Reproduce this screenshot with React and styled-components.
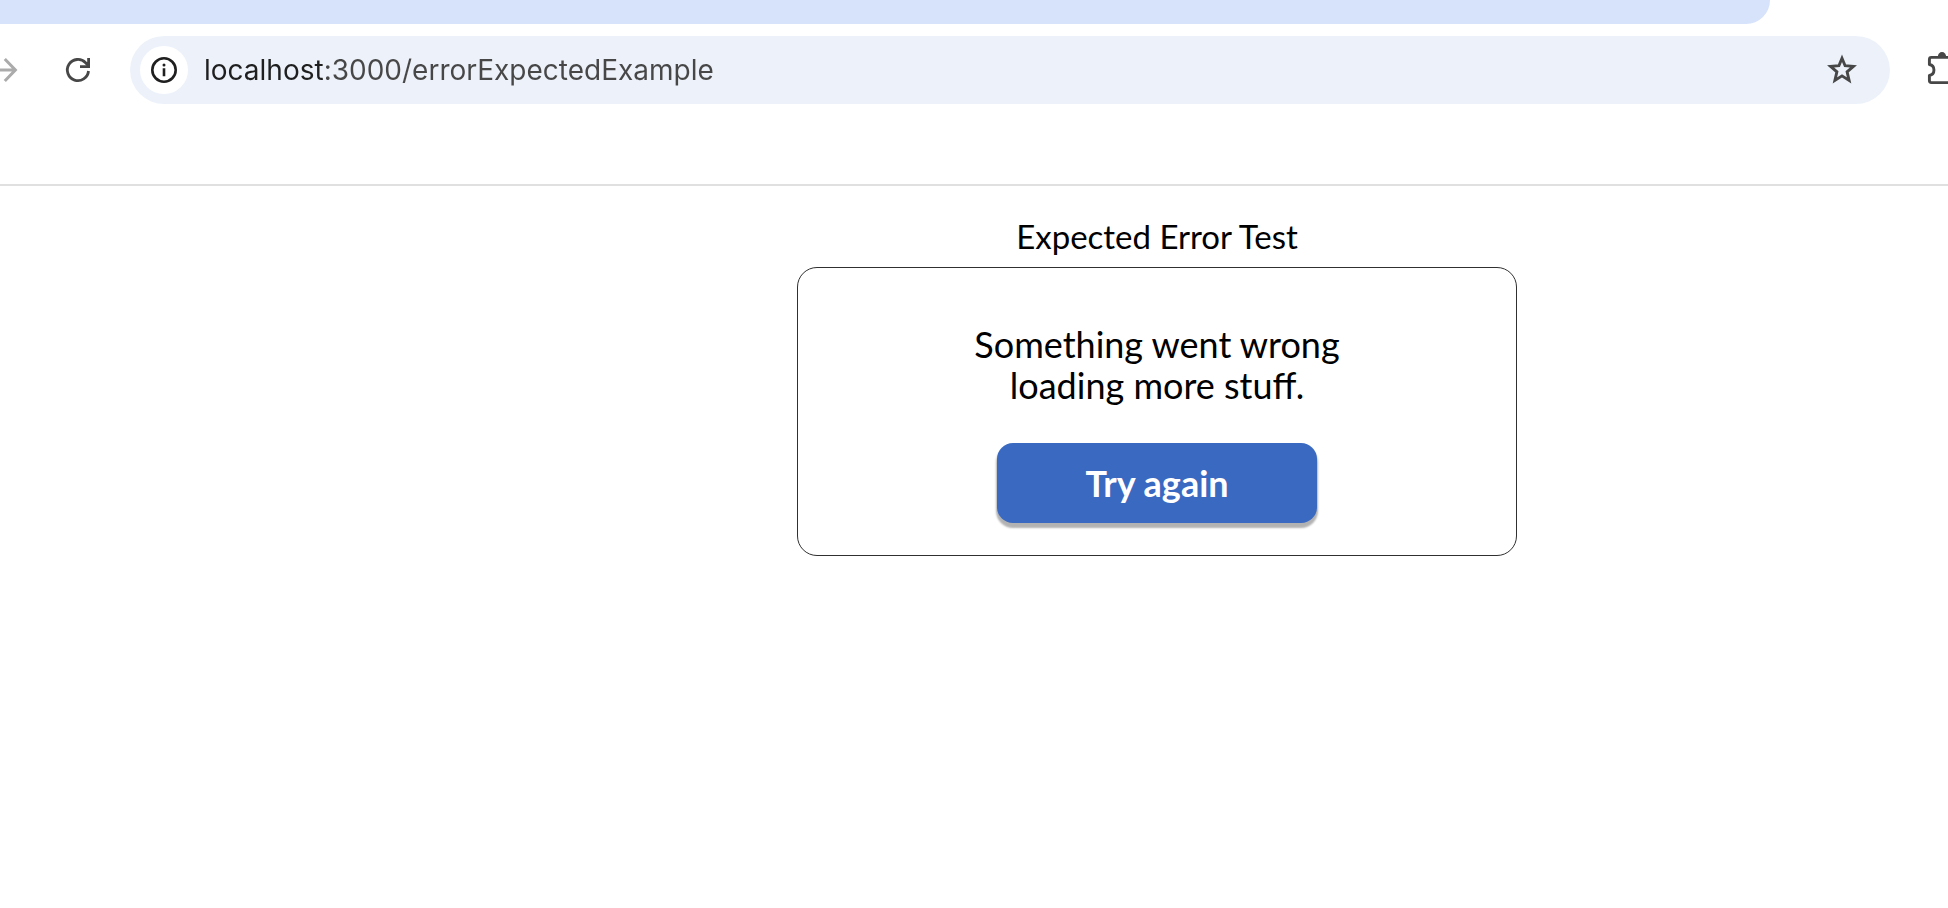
import React, { useState } from "react";
import styled, { createGlobalStyle } from "styled-components";

const GlobalStyle = createGlobalStyle`
  * {
    box-sizing: border-box;
  }
  body {
    margin: 0;
    background: #fff;
    color: #000;
    font-family: Lato, "Liberation Sans", sans-serif;
    overflow-x: hidden;
  }
`;

const Chrome = styled.header`
  border-bottom: 2px solid #e0e0e0;
`;

const TabStrip = styled.div`
  height: 24px;
  margin-right: 178px;
  background: #d7e2fb;
  border-bottom-right-radius: 24px;
`;

const Toolbar = styled.nav`
  display: flex;
  align-items: center;
  gap: 30px;
  padding: 12px 0 80px;
`;

const IconButton = styled.button`
  flex: none;
  display: flex;
  align-items: center;
  justify-content: ${(p) => p.$align || "center"};
  width: ${(p) => p.$width || 44}px;
  height: 48px;
  padding: 0;
  border: 0;
  border-radius: ${(p) => (p.$round ? "50%" : "0")};
  background: ${(p) => (p.$round ? "#fff" : "transparent")};
  color: ${(p) => p.$color || "#474747"};
  overflow: hidden;
  cursor: pointer;

  svg {
    flex: none;
    display: block;
  }
`;

const AddressBar = styled.form`
  flex: 1;
  min-width: 0;
  display: flex;
  align-items: center;
  height: 68px;
  padding: 0 24px 0 10px;
  border-radius: 34px;
  background: #edf2fa;
`;

const AddressInput = styled.input`
  flex: 1;
  min-width: 0;
  height: 48px;
  margin: 0 16px;
  padding: 0;
  border: 0;
  outline: 0;
  font: 400 28px/48px Inter, "Liberation Sans", sans-serif;
  background: linear-gradient(to right, #1f1f1f 119px, #474747 119px);
  background-clip: text;
  -webkit-background-clip: text;
  color: transparent;
  caret-color: #1f1f1f;
`;

const Main = styled.main`
  display: flex;
  flex-direction: column;
  align-items: center;
  padding: 32px 0 32px 366px;
`;

const Title = styled.h1`
  margin: 0 0 13px;
  font-size: 33px;
  line-height: 36px;
  font-weight: 400;
`;

const Card = styled.section`
  display: flex;
  flex-direction: column;
  align-items: center;
  width: 100%;
  max-width: 720px;
  padding: 56px 32px 32px;
  border: 1px solid #303030;
  border-radius: 20px;
`;

const Message = styled.p`
  max-width: 400px;
  margin: 0 0 37px;
  font-size: 36px;
  line-height: 41px;
  font-weight: 400;
  text-align: center;
`;

const RetryButton = styled.button`
  width: 320px;
  height: 80px;
  padding: 0;
  border: 0;
  border-radius: 16px;
  background: #3a69c1;
  box-shadow: 0 4px 2px 1px rgba(0, 0, 0, 0.3);
  color: #fff;
  font: 700 36px/40px Lato, "Liberation Sans", sans-serif;
  cursor: pointer;
`;

const ForwardIcon = () => (
  <svg width="26" height="32" viewBox="0 0 26 32" fill="none" stroke="currentColor" strokeWidth="3">
    <path d="M0 16H15.5M4.8 5L15.4 16L4.8 27" />
  </svg>
);

const ReloadIcon = () => (
  <svg width="32" height="32" viewBox="0 0 32 32" fill="none" stroke="currentColor" strokeWidth="2.8">
    <path d="M26.5 17A10.6 10.6 0 1 1 23.6 8.7L26 11.4" />
    <path d="M26.6 4V12.6H18" />
    <path d="M22 8L27 12.5V8Z" fill="currentColor" stroke="none" />
  </svg>
);

const InfoIcon = () => (
  <svg width="32" height="32" viewBox="0 0 32 32" fill="none" stroke="currentColor" strokeWidth="2.6">
    <circle cx="16" cy="16" r="11.7" />
    <path d="M16 14.3V22.3" />
    <circle cx="16" cy="11" r="1.5" fill="currentColor" stroke="none" />
  </svg>
);

const StarIcon = () => (
  <svg width="32" height="32" viewBox="0 0 32 32" fill="none" stroke="currentColor" strokeWidth="2.9">
    <path d="M16 4.2L19.1 11.7L27.4 12.4L21.1 17.8L23.1 26.4L16 21.9L8.9 26.4L10.9 17.8L4.6 12.4L12.9 11.7Z" />
  </svg>
);

const ExtensionsIcon = () => (
  <svg width="44" height="40" viewBox="0 0 44 40" fill="none" stroke="currentColor" strokeWidth="2.9">
    <path d="M11.4 7.4H34.6V32.6H11.4Q9.4 32.6 9.4 30.6V25.5A5.6 5.6 0 0 0 9.4 14.5V9.4Q9.4 7.4 11.4 7.4Z" strokeLinejoin="round" />
    <path d="M17.8 7A4.2 5 0 0 1 26.2 7Z" fill="currentColor" stroke="none" />
  </svg>
);

export default function App() {
  const [address, setAddress] = useState("localhost:3000/errorExpectedExample");

  return (
    <>
      <GlobalStyle />
      <Chrome>
        <TabStrip />
        <Toolbar>
          <IconButton type="button" aria-label="Forward" $width={26} $align="flex-start" $color="#ababab">
            <ForwardIcon />
          </IconButton>
          <IconButton type="button" aria-label="Reload">
            <ReloadIcon />
          </IconButton>
          <AddressBar onSubmit={(e) => e.preventDefault()}>
            <IconButton type="button" aria-label="View site information" $round $width={48} $color="#1f1f1f">
              <InfoIcon />
            </IconButton>
            <AddressInput
              aria-label="Address"
              spellCheck={false}
              value={address}
              onChange={(e) => setAddress(e.target.value)}
            />
            <IconButton type="button" aria-label="Bookmark this page" $width={48}>
              <StarIcon />
            </IconButton>
          </AddressBar>
          <IconButton type="button" aria-label="Extensions" $width={28} $align="flex-start">
            <ExtensionsIcon />
          </IconButton>
        </Toolbar>
      </Chrome>
      <Main>
        <Title>Expected Error Test</Title>
        <Card>
          <Message>Something went wrong loading more stuff.</Message>
          <RetryButton type="button">Try again</RetryButton>
        </Card>
      </Main>
    </>
  );
}
